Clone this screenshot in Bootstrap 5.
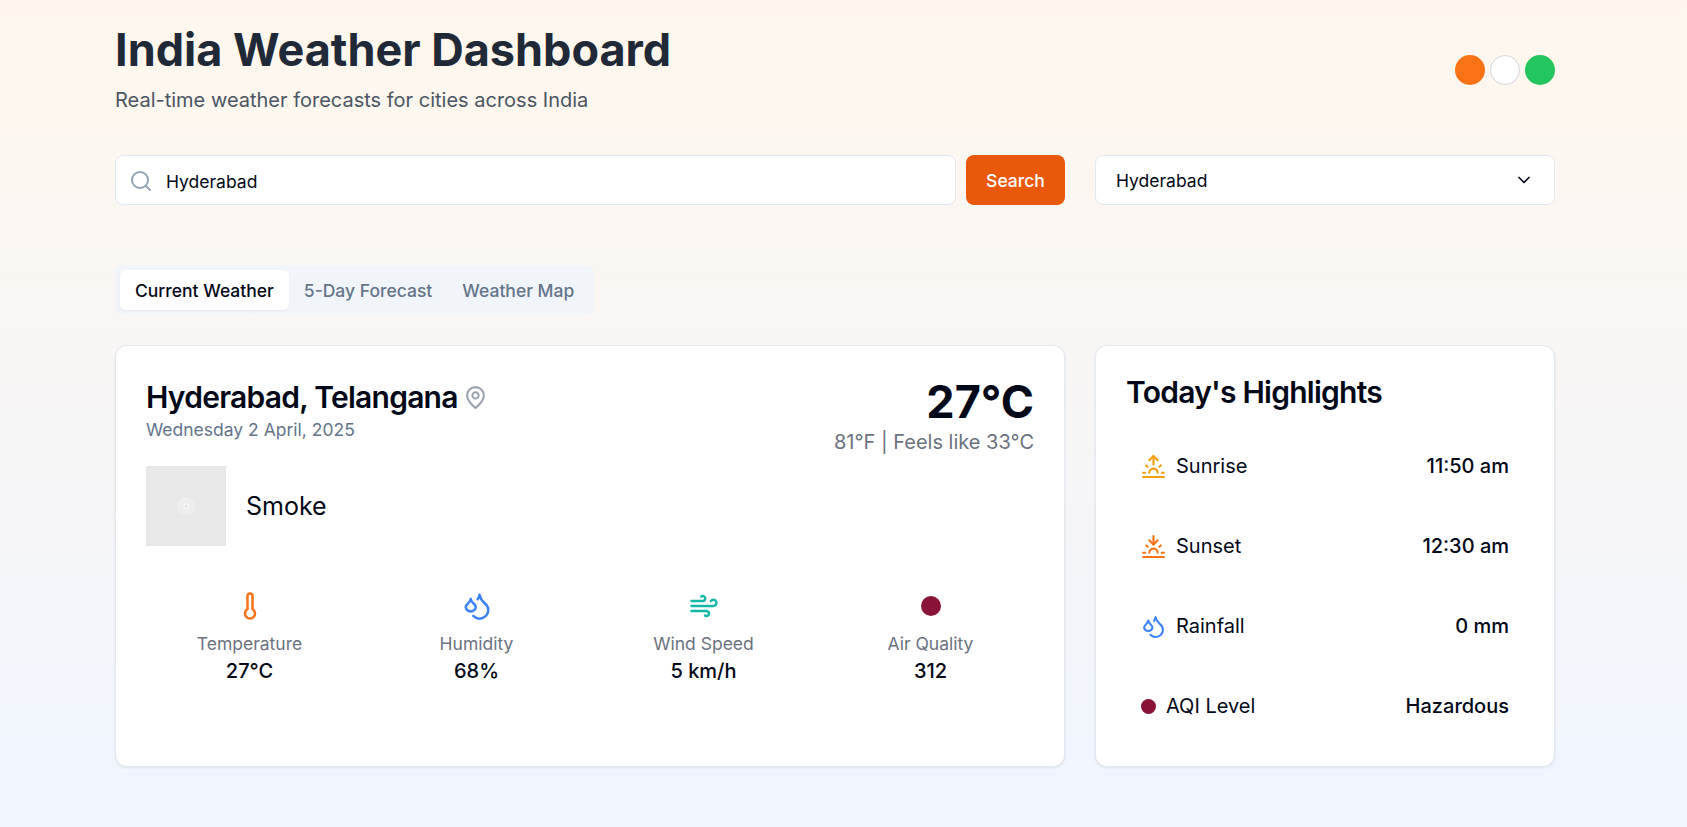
<!DOCTYPE html>
<html lang="en">
<head>
    <meta charset="UTF-8">
    <title>India Weather Dashboard</title>
    <meta name="viewport" content="width=device-width, initial-scale=1">
    <link href="https://cdn.jsdelivr.net/npm/bootstrap@5.3.3/dist/css/bootstrap.min.css" rel="stylesheet">
    <style>
        html, body { height: 100%; }
        body {
            font-family: "Inter", "Liberation Sans", sans-serif;
            background: linear-gradient(to bottom, #fff7ed, #f0f5ff);
            color: #020817;
            font-size: 17.5px;
        }
        .page-wrap { width: 1440px; margin-left: 115px; padding-top: 25px; }
        .page-title { font-size: 45px; font-weight: 700; line-height: 50px; color: #1f2937; margin: 0 0 10px; }
        .page-sub { font-size: 20px; line-height: 30px; color: #4b5563; margin: 0; }
        .flag-group { gap: 5px; margin-top: 30px; }
        .flag-dot { width: 30px; height: 30px; border-radius: 50%; }
        .flag-orange { background: #f97316; }
        .flag-white { background: #fff; border: 1px solid #d1d5db; }
        .flag-green { background: #22c55e; }
        .header-row { height: 110px; }
        .search-row { margin-top: 20px; gap: 30px; }
        .main-col { width: 950px; flex: none; }
        .side-col { width: 460px; flex: none; }
        .search-group { gap: 10px; }
        .search-box { position: relative; flex: 1; }
        .search-icon { position: absolute; left: 14px; top: 14px; color: #94a3b8; }
        .search-input.form-control {
            height: 50px; padding: 8px 12px 6px 50px; font-size: 17.5px; color: #020817;
            border-color: #e2e8f0; border-radius: 8px; background: #fff;
        }
        .search-btn.btn {
            width: 99px; height: 50px; padding-top: 8px; background: #ea580c; border: 0; color: #fff;
            font-size: 17.5px; font-weight: 500; border-radius: 8px;
        }
        .city-select {
            height: 50px; background: #fff; border: 1px solid #e2e8f0; border-radius: 8px;
            padding: 0 20px; font-size: 17.5px; color: #020817;
        }
        .city-select span { padding-top: 2px; }
        .tab-bar { margin-top: 60px; background: #f1f5f9; border-radius: 8px; padding: 5px; width: 479px; height: 50px; }
        .tab-bar .nav-link {
            padding: 0 15px; height: 40px; line-height: 42px; font-size: 17.5px; font-weight: 500;
            color: #64748b; border-radius: 6px; white-space: nowrap;
        }
        .tab-bar .nav-link.active { background: #fff; color: #020817; box-shadow: 0 1px 2px rgba(0,0,0,.05); }
        .content-row { margin-top: 30px; gap: 30px; }
        .panel.card { height: 422px; border: 1px solid #e2e8f0; border-radius: 12px; box-shadow: 0 1px 3px rgba(0,0,0,.08); background: #fff; }
        .panel-main { padding: 31px 30px 30px; }
        .city-name { font-size: 30px; font-weight: 600; line-height: 40px; letter-spacing: -.75px; margin: 0; }
        .city-date { font-size: 17.5px; line-height: 25px; color: #64748b; }
        .pin-icon { color: #9ca3af; margin-left: 5px; }
        .temp-big { font-size: 45px; font-weight: 700; line-height: 50px; }
        .temp-sub { font-size: 20px; line-height: 30px; color: #6b7280; }
        .cond-row { margin-top: 9px; gap: 20px; }
        .cond-img { width: 80px; height: 80px; display: block; }
        .cond-text { font-size: 25px; padding-top: 2px; }
        .metric-row { margin-top: 45px; gap: 20px; }
        .metric-cell { flex: 1 1 0; text-align: center; }
        .metric-icon { height: 30px; display: flex; justify-content: center; align-items: center; }
        .metric-label { margin-top: 10px; color: #6b7280; font-size: 17.5px; line-height: 25px; }
        .metric-value { font-size: 20px; font-weight: 500; line-height: 30px; }
        .aqi-dot { width: 20px; height: 20px; border-radius: 50%; background: #881337; display: inline-block; }
        .aqi-dot-sm { width: 15px; height: 15px; border-radius: 50%; background: #881337; display: inline-block; }
        .panel-side { padding: 30px; }
        .side-title { font-size: 30px; font-weight: 600; line-height: 32px; letter-spacing: -.75px; margin: 0 0 18px; }
        .hl-row { height: 80px; flex: none; padding: 0 15px; font-size: 20px; }
        .hl-label { gap: 10px; }
        .hl-value { font-weight: 500; }
        .c-amber { color: #f59e0b; }
        .c-orange { color: #f97316; }
        .c-blue { color: #3b82f6; }
        .c-teal { color: #14b8a6; }
    </style>
</head>
<body>
    <div class="page-wrap">
        <div class="header-row d-flex justify-content-between align-items-start">
            <div>
                <h1 class="page-title">India Weather Dashboard</h1>
                <p class="page-sub">Real-time weather forecasts for cities across India</p>
            </div>
            <div class="d-flex flag-group">
                <span class="flag-dot flag-orange"></span>
                <span class="flag-dot flag-white"></span>
                <span class="flag-dot flag-green"></span>
            </div>
        </div>

        <div class="d-flex search-row">
            <div class="main-col d-flex search-group">
                <div class="search-box">
                    <svg class="search-icon" width="24" height="24" viewBox="0 0 24 24" fill="none" stroke="currentColor" stroke-width="2" stroke-linecap="round" stroke-linejoin="round"><circle cx="11" cy="11" r="8"/><path d="m21 21-4.3-4.3"/></svg>
                    <input class="form-control search-input" type="text" value="Hyderabad">
                </div>
                <button class="btn search-btn" type="button">Search</button>
            </div>
            <div class="side-col">
                <div class="city-select d-flex justify-content-between align-items-center">
                    <span>Hyderabad</span>
                    <svg width="20" height="20" viewBox="0 0 24 24" fill="none" stroke="currentColor" stroke-width="2" stroke-linecap="round" stroke-linejoin="round"><path d="m6 9 6 6 6-6"/></svg>
                </div>
            </div>
        </div>

        <ul class="nav flex-nowrap tab-bar">
            <li class="nav-item"><a class="nav-link active" href="#">Current Weather</a></li>
            <li class="nav-item"><a class="nav-link" href="#">5-Day Forecast</a></li>
            <li class="nav-item"><a class="nav-link" href="#">Weather Map</a></li>
        </ul>

        <div class="d-flex content-row">
            <div class="card panel panel-main main-col">
                <div class="d-flex justify-content-between align-items-start">
                    <div>
                        <h2 class="city-name d-flex align-items-center">Hyderabad, Telangana
                            <svg class="pin-icon" width="25" height="25" viewBox="0 0 24 24" fill="none" stroke="currentColor" stroke-width="2" stroke-linecap="round" stroke-linejoin="round"><path d="M20 10c0 6-8 12-8 12s-8-6-8-12a8 8 0 0 1 16 0Z"/><circle cx="12" cy="10" r="3"/></svg>
                        </h2>
                        <div class="city-date">Wednesday 2 April, 2025</div>
                    </div>
                    <div class="text-end">
                        <div class="temp-big">27°C</div>
                        <div class="temp-sub">81°F | Feels like 33°C</div>
                    </div>
                </div>

                <div class="d-flex align-items-center cond-row">
                    <svg class="cond-img" viewBox="0 0 80 80">
                        <rect width="80" height="80" fill="#e8e8e8"/>
                        <circle cx="40" cy="40" r="9" fill="#eeeeee"/>
                        <circle cx="40" cy="40" r="3" fill="#f6f6f6"/>
                        <circle cx="40" cy="40" r="1" fill="#d4d4d4"/>
                    </svg>
                    <span class="cond-text">Smoke</span>
                </div>

                <div class="d-flex metric-row">
                    <div class="metric-cell">
                        <div class="metric-icon c-orange"><svg width="30" height="30" viewBox="0 0 24 24" fill="none" stroke="currentColor" stroke-width="2" stroke-linecap="round" stroke-linejoin="round"><path d="M14 4v10.54a4 4 0 1 1-4 0V4a2 2 0 0 1 4 0Z"/></svg></div>
                        <div class="metric-label">Temperature</div>
                        <div class="metric-value">27°C</div>
                    </div>
                    <div class="metric-cell">
                        <div class="metric-icon c-blue"><svg width="30" height="30" viewBox="0 0 24 24" fill="none" stroke="currentColor" stroke-width="2" stroke-linecap="round" stroke-linejoin="round"><path d="M7 16.3c2.2 0 4-1.83 4-3.05 0-1.16-.57-2.26-1.71-3.19S7.29 7.75 7 6.3c-.29 1.45-1.14 2.84-2.29 3.76S3 12.1 3 13.25c0 1.22 1.8 3.05 4 3.05z"/><path d="M12.56 6.6A10.97 10.97 0 0 0 14 3.02c.5 2.5 2 4.9 4 6.5s3 3.5 3 5.5a6.98 6.98 0 0 1-11.91 4.97"/></svg></div>
                        <div class="metric-label">Humidity</div>
                        <div class="metric-value">68%</div>
                    </div>
                    <div class="metric-cell">
                        <div class="metric-icon c-teal"><svg width="30" height="30" viewBox="0 0 24 24" fill="none" stroke="currentColor" stroke-width="2" stroke-linecap="round" stroke-linejoin="round"><path d="M12.8 19.6A2 2 0 1 0 14 16H2"/><path d="M17.5 8a2.5 2.5 0 1 1 2 4H2"/><path d="M9.8 4.4A2 2 0 1 1 11 8H2"/></svg></div>
                        <div class="metric-label">Wind Speed</div>
                        <div class="metric-value">5 km/h</div>
                    </div>
                    <div class="metric-cell">
                        <div class="metric-icon"><span class="aqi-dot"></span></div>
                        <div class="metric-label">Air Quality</div>
                        <div class="metric-value">312</div>
                    </div>
                </div>
            </div>

            <div class="card panel panel-side side-col">
                <h3 class="side-title">Today's Highlights</h3>
                <div class="d-flex justify-content-between align-items-center hl-row">
                    <span class="d-flex align-items-center hl-label"><svg class="c-amber" width="25" height="25" viewBox="0 0 24 24" fill="none" stroke="currentColor" stroke-width="2" stroke-linecap="round" stroke-linejoin="round"><path d="M12 2v8"/><path d="m4.93 10.93 1.41 1.41"/><path d="M2 18h2"/><path d="M20 18h2"/><path d="m19.07 10.93-1.41 1.41"/><path d="M22 22H2"/><path d="m8 6 4-4 4 4"/><path d="M16 18a4 4 0 0 0-8 0"/></svg>Sunrise</span>
                    <span class="hl-value">11:50 am</span>
                </div>
                <div class="d-flex justify-content-between align-items-center hl-row">
                    <span class="d-flex align-items-center hl-label"><svg class="c-orange" width="25" height="25" viewBox="0 0 24 24" fill="none" stroke="currentColor" stroke-width="2" stroke-linecap="round" stroke-linejoin="round"><path d="M12 10V2"/><path d="m4.93 10.93 1.41 1.41"/><path d="M2 18h2"/><path d="M20 18h2"/><path d="m19.07 10.93-1.41 1.41"/><path d="M22 22H2"/><path d="m16 6-4 4-4-4"/><path d="M16 18a4 4 0 0 0-8 0"/></svg>Sunset</span>
                    <span class="hl-value">12:30 am</span>
                </div>
                <div class="d-flex justify-content-between align-items-center hl-row">
                    <span class="d-flex align-items-center hl-label"><svg class="c-blue" width="25" height="25" viewBox="0 0 24 24" fill="none" stroke="currentColor" stroke-width="2" stroke-linecap="round" stroke-linejoin="round"><path d="M7 16.3c2.2 0 4-1.83 4-3.05 0-1.16-.57-2.26-1.71-3.19S7.29 7.75 7 6.3c-.29 1.45-1.14 2.84-2.29 3.76S3 12.1 3 13.25c0 1.22 1.8 3.05 4 3.05z"/><path d="M12.56 6.6A10.97 10.97 0 0 0 14 3.02c.5 2.5 2 4.9 4 6.5s3 3.5 3 5.5a6.98 6.98 0 0 1-11.91 4.97"/></svg>Rainfall</span>
                    <span class="hl-value">0 mm</span>
                </div>
                <div class="d-flex justify-content-between align-items-center hl-row">
                    <span class="d-flex align-items-center hl-label"><span class="aqi-dot-sm"></span>AQI Level</span>
                    <span class="hl-value">Hazardous</span>
                </div>
            </div>
        </div>
    </div>
    <script src="https://cdn.jsdelivr.net/npm/bootstrap@5.3.3/dist/js/bootstrap.bundle.min.js"></script>
</body>
</html>
